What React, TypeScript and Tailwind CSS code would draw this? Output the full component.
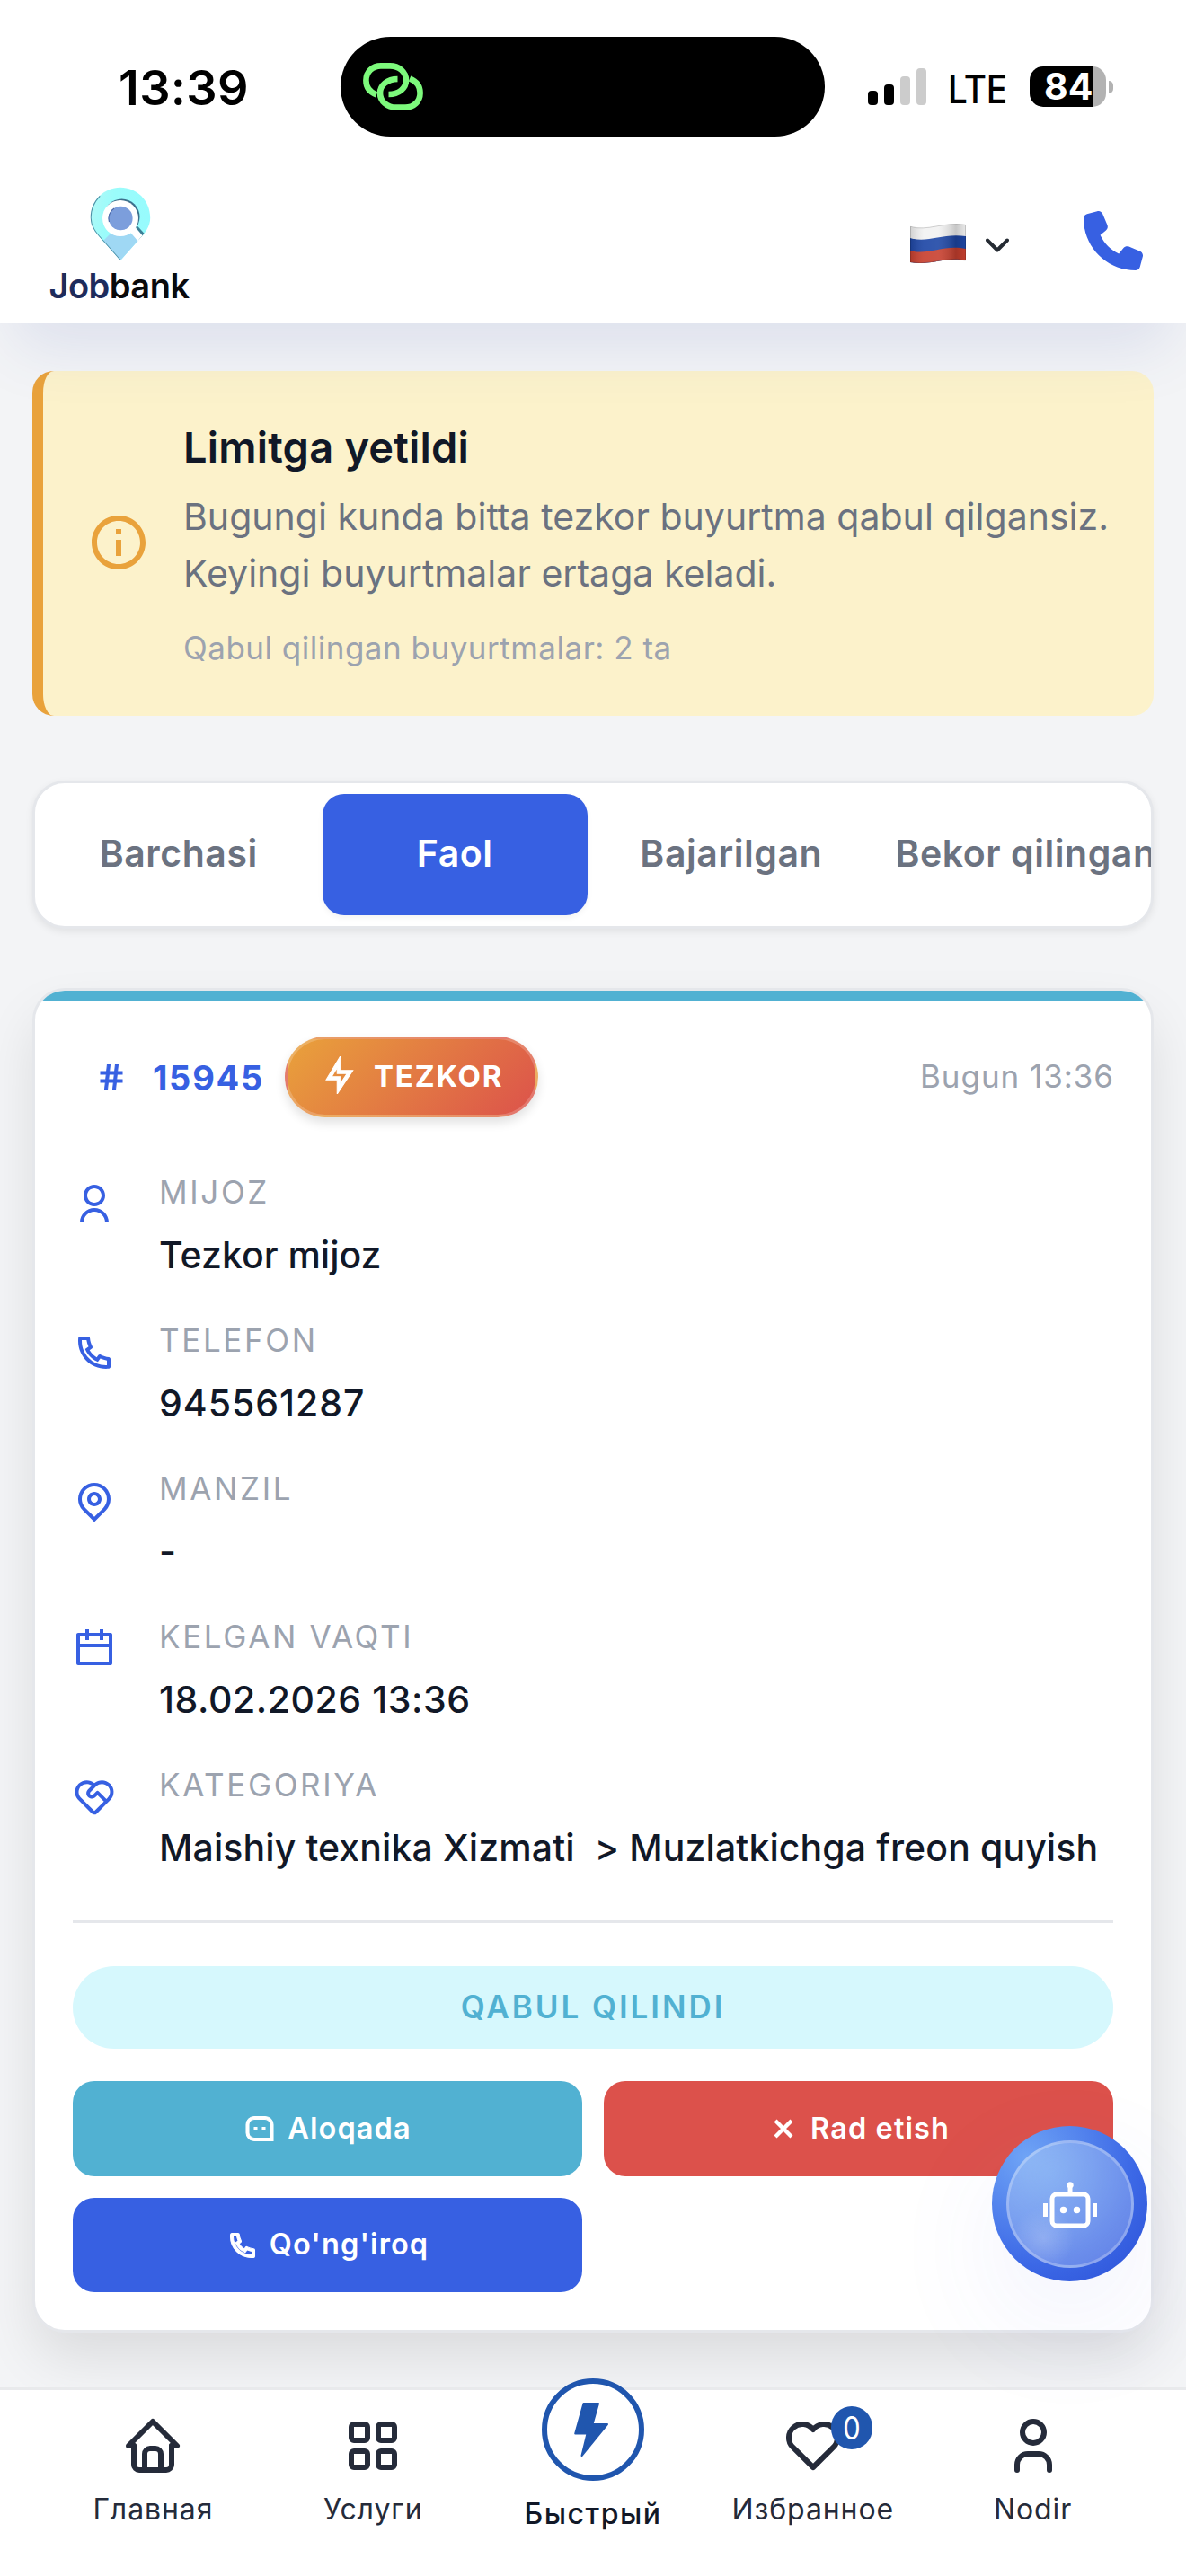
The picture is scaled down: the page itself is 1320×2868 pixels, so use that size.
import type { ReactNode } from "react";
import {
  RiCalendarLine,
  RiCloseLine,
  RiFlashlightLine,
  RiHashtag,
  RiInformationLine,
  RiMapPinLine,
  RiMessage3Line,
  RiPhoneLine,
  RiServiceLine,
  RiUserLine,
} from "react-icons/ri";

function LinkIcon() {
  const loop = "M15 35.5C7.5 32.5 3.4 27 3.4 19.5C3.4 10 10.5 3.4 20 3.4H30C40 3.4 48 10 48 19.5C48 28 40 35 28.5 35";
  return (
    <svg viewBox="0 0 67 53" className="h-[53px] w-[67px]" fill="none" stroke="#7dfa7c" strokeWidth="6.6">
      <path d={loop} />
      <path d={loop} transform="rotate(180 33.5 26.5)" />
    </svg>
  );
}

function StatusBar() {
  return (
    <div className="flex h-[193px] items-center">
      <div className="mt-[3px] w-[379px] pl-[132px] text-[54px] font-semibold leading-[60px] tracking-[0.3px] text-black">13:39</div>
      <div className="flex h-[111px] w-[539px] items-center rounded-[56px] bg-black pl-[25px]">
        <LinkIcon />
      </div>
      <div className="ml-12 flex h-[41px] items-end gap-[7px]">
        <span className="h-4 w-[11px] rounded-[4px] bg-black" />
        <span className="h-[23px] w-[11px] rounded-[4px] bg-black" />
        <span className="h-8 w-[11px] rounded-[4px] bg-[#cccccc]" />
        <span className="h-[41px] w-[11px] rounded-[4px] bg-[#cccccc]" />
      </div>
      <div className="ml-[24px] mt-[4px] w-[64px] origin-left scale-x-[0.88] text-[44px] font-medium leading-[48px] tracking-[-0.5px] text-black">
        LTE
      </div>
      <div className="ml-[27px] flex h-[45px] w-[85px] items-center overflow-hidden rounded-[15px] bg-[linear-gradient(90deg,#000_71px,#b2b2b2_71px)] pl-4 text-[41px] font-bold leading-[45px] text-white">
        84
      </div>
      <span className="ml-[3px] h-[14px] w-[5px] rounded-r-full bg-[#b2b2b2]" />
    </div>
  );
}

function Logo() {
  return (
    <div className="flex w-[160px] flex-col items-center">
      <svg viewBox="0 0 68 82" className="h-[82px] w-[68px]">
        <defs>
          <linearGradient id="pin" x1="0" y1="0" x2="1" y2="0.3">
            <stop offset="0" stopColor="#b4f8f6" />
            <stop offset="0.4" stopColor="#9afcfb" />
            <stop offset="1" stopColor="#97fbfd" />
          </linearGradient>
          <clipPath id="drop">
            <path d="M34 82L14.5 60C6 51 .8 44 .8 34.5C.8 15 16 .8 34 .8S67.200 15 67.200 34.500C67.200 44 62 51 53.500 60Z" />
          </clipPath>
        </defs>
        <g clipPath="url(#drop)">
          <rect width="68" height="82" fill="url(#pin)" />
          <path d="M15 60L23 52L46 52L56 60L34 84Z" fill="#9fd8f4" />
          <path d="M34 82L14.500 60C6 51 .8 44 .8 34.500C.8 25 5 16 11 10" fill="none" stroke="#4f8fa6" strokeWidth="1.8" />
          <circle cx="35.500" cy="33.500" r="20" fill="#3c6f8c" />
          <path d="M50 47L60 58" stroke="#3c7f96" strokeWidth="9" />
          <path d="M48 48L60 62" stroke="#fff" strokeWidth="8" />
          <circle cx="34" cy="35" r="20" fill="#fff" />
        </g>
        <circle cx="34.300" cy="35" r="13.300" fill="#7c9edc" />
        <path d="M21.500 39A13.300 13.300 0 0 1 27 24" fill="none" stroke="#4a67a8" strokeWidth="1.200" />
      </svg>
      <div className="-ml-[3px] mt-2 text-[38px] font-semibold leading-[40px] tracking-[-0.5px] text-[#0a0a0c]">
        <span className="text-[#1e2c5c]">Job</span>bank
      </div>
    </div>
  );
}

function Flag() {
  return (
    <svg viewBox="0 0 62 44" className="mt-[6px] h-[44px] w-[62px]">
      <defs>
        <linearGradient id="sheen" x1="0" x2="1" y1="0" y2="0">
          <stop offset="0" stopColor="#000" stopOpacity="0.14" />
          <stop offset="0.25" stopColor="#fff" stopOpacity="0.08" />
          <stop offset="0.5" stopColor="#fff" stopOpacity="0.1" />
          <stop offset="0.82" stopColor="#000" stopOpacity="0.18" />
          <stop offset="1" stopColor="#000" stopOpacity="0.04" />
        </linearGradient>
        <clipPath id="cloth">
          <path d="M0 3C20 9 36-3 62 1V41C40 36 24 47 0 43Z" />
        </clipPath>
      </defs>
      <g clipPath="url(#cloth)">
        <rect width="62" height="44" fill="#f2f2f2" />
        <path d="M0 16C20 22 36 10 62 14V44H0Z" fill="#1e47a6" />
        <path d="M0 30C20 36 36 23 62 28V44H0Z" fill="#c8402f" />
        <rect width="62" height="44" fill="url(#sheen)" />
      </g>
      <path d="M.5 3.300C20 9 36-2.500 61.500 1.300V41C40 36 24 46.500 .5 43Z" fill="none" stroke="#000" strokeOpacity="0.16" />
    </svg>
  );
}

function Header() {
  return (
    <header className="relative z-10 h-[360px] shrink-0 bg-white shadow-[0_42px_66px_-18px_rgba(60,85,180,0.13)]">
      <StatusBar />
      <div className="flex h-[167px] items-start justify-between pl-[54px] pr-12 pt-[15px]">
        <Logo />
        <div className="flex h-[120px] items-center">
          <Flag />
          <svg viewBox="0 0 26 16" className="ml-[22px] mt-[10px] h-4 w-[26px]" fill="none" stroke="#252b33" strokeWidth="4" strokeLinecap="round" strokeLinejoin="round">
            <path d="M2 2.500L13 13.500L24 2.500" />
          </svg>
          <svg viewBox="0 0 512 512" className="ml-[83px] h-[66px] w-[66px]" fill="#3760e2">
            <path d="M164.900 24.600c-7.700-18.600-28-28.500-47.400-23.200l-88 24C12.100 30.200 0 46 0 64C0 311.400 200.600 512 448 512c18 0 33.800-12.100 38.600-29.500l24-88c5.300-19.400-4.600-39.700-23.200-47.400l-96-40c-16.300-6.800-35.200-2.100-46.300 11.600L304.700 368C234.300 334.700 177.300 277.700 144 207.300L193.300 167c13.700-11.200 18.400-30 11.600-46.300l-40-96z" />
          </svg>
        </div>
      </div>
    </header>
  );
}

function LimitNotice() {
  return (
    <section className="flex h-[384px] rounded-[24px] border-l-[12px] border-[#e9a23b] bg-[#fcf2cb] pl-12">
      <RiInformationLine className="mt-[155px] h-[72px] w-[72px] shrink-0 text-[#e9a23b]" />
      <div className="ml-9 whitespace-nowrap pt-[55px]">
        <h2 className="text-[47px] font-semibold leading-[60px] tracking-[0.19px] text-[#111827]">Limitga yetildi</h2>
        <p className="mt-4 text-[41px] leading-[63px] tracking-[0.03px] text-[#6b7280]">
          Bugungi kunda bitta tezkor buyurtma qabul qilgansiz.
          <br />
          Keyingi buyurtmalar ertaga keladi.
        </p>
        <p className="mt-6 text-[35px] leading-[54px] tracking-[0.5px] text-[#9ca3af]">Qabul qilingan buyurtmalar: 2 ta</p>
      </div>
    </section>
  );
}

const tabs = ["Barchasi", "Faol", "Bajarilgan", "Bekor qilingan"];

function Tabs() {
  return (
    <div className="mt-[72px] flex h-[165px] gap-3 overflow-hidden rounded-[36px] border-[3px] border-[#e5e7eb] bg-white p-3 shadow-[0_3px_9px_rgba(0,0,0,0.08)]">
      {tabs.map((tab) => (
        <button
          key={tab}
          className={
            tab === "Faol"
              ? "w-[295.5px] shrink-0 whitespace-nowrap rounded-[24px] bg-[#3760e2] pb-0.5 text-[41px] font-semibold tracking-[0.55px] text-white shadow-[0_3px_6px_rgba(0,0,0,0.05)]"
              : "min-w-[295.5px] shrink-0 whitespace-nowrap px-[23px] pb-0.5 text-[41px] font-semibold tracking-[0.55px] text-[#6b7280]"
          }
        >
          {tab}
        </button>
      ))}
    </div>
  );
}

function DetailRow({ icon, label, children, spacing }: { icon: ReactNode; label: string; children: ReactNode; spacing: string }) {
  return (
    <div className="flex h-[127px] gap-12">
      <div className="mt-4 text-[48px] text-[#3760e2]">{icon}</div>
      <div className="-mt-px whitespace-nowrap">
        <div className="text-[35px] leading-[54px] tracking-[2.65px] text-[#9ca3af]">{label}</div>
        <div className={`mt-3 whitespace-pre text-[41px] font-medium leading-[63px] text-[#111827] ${spacing}`}>{children}</div>
      </div>
    </div>
  );
}

function OrderCard() {
  return (
    <article className="mt-[66px] h-[1497px] overflow-hidden rounded-[36px] border-[3px] border-[#e5e7eb] bg-white shadow-[0_30px_60px_-3px_rgba(0,0,0,0.1)]">
      <div className="h-3 bg-[#51b1d2]" />
      <div className="px-[42px]">
        <div className="mt-[39px] flex h-[90px] items-center">
          <RiHashtag className="ml-[25px] h-9 w-9 stroke-[#3760e2] stroke-[0.7] text-[#3760e2]" />
          <span className="ml-7 mt-px w-[147px] text-[38px] font-bold leading-[48px] tracking-[1.74px] text-[#3760e2]">15945</span>
          <span className="flex h-[90px] w-[282px] items-center rounded-full border-[3px] border-white/20 bg-[linear-gradient(135deg,#e9a23b,#dc524b)] pl-[36px] text-[33px] font-bold tracking-[1.8px] text-white shadow-[0_6px_12px_rgba(0,0,0,0.12)]">
            <RiFlashlightLine className="mb-1 mr-[18px] h-[42px] w-[42px] stroke-white stroke-[0.6]" />
            TEZKOR
          </span>
          <span className="-mt-px ml-auto text-[35px] tracking-[0.95px] -mr-px text-[#9ca3af]">Bugun 13:36</span>
        </div>
        <div className="mt-[57px] flex flex-col gap-[38px]">
          <DetailRow icon={<RiUserLine />} label="MIJOZ" spacing="tracking-normal">
            Tezkor mijoz
          </DetailRow>
          <DetailRow icon={<RiPhoneLine />} label="TELEFON" spacing="tracking-[0.96px]">
            945561287
          </DetailRow>
          <DetailRow icon={<RiMapPinLine />} label="MANZIL" spacing="tracking-normal">
            -
          </DetailRow>
          <DetailRow icon={<RiCalendarLine />} label="KELGAN VAQTI" spacing="tracking-[0.55px]">
            18.02.2026 13:36
          </DetailRow>
          <DetailRow icon={<RiServiceLine />} label="KATEGORIYA" spacing="tracking-[0.1px]">
            {"Maishiy texnika Xizmati  > Muzlatkichga freon quyish"}
          </DetailRow>
        </div>
        <div className="mt-[50px] h-[3px] bg-[#e5e7eb]" />
        <div className="mt-12 flex h-[92px] items-center justify-center rounded-full bg-[#d6f8fd] pb-0.5 text-[35px] font-semibold tracking-[2.95px] text-[#51b1d2]">
          QABUL QILINDI
        </div>
        <div className="mt-9 grid grid-cols-2 gap-6 text-[32.5px] font-semibold tracking-[1.1px] text-white">
          <button className="flex h-[106px] items-center justify-center rounded-[24px] bg-[#51b1d2]">
            <RiMessage3Line className="mr-[13px] h-9 w-9 stroke-white stroke-[0.7]" />
            Aloqada
          </button>
          <button className="flex h-[106px] items-center justify-center rounded-[24px] bg-[#dc514b]">
            <RiCloseLine className="mr-[12px] h-9 w-9 stroke-white stroke-[0.9]" />
            Rad etish
          </button>
          <button className="flex h-[105px] items-center justify-center rounded-[24px] bg-[#3760e2]">
            <RiPhoneLine className="mr-[12px] h-9 w-9 stroke-white stroke-[0.7]" />
            Qo'ng'iroq
          </button>
        </div>
      </div>
    </article>
  );
}

function AssistantButton() {
  return (
    <button className="absolute left-[1104px] top-[2367px] z-30 flex h-[173px] w-[173px] items-center justify-center rounded-full bg-[radial-gradient(circle_at_22%_20%,#6fa4f6_0%,#3c68e6_62%,#2a4fd6_100%)] shadow-[0_48px_130px_rgba(79,90,235,0.08)]">
      <span className="flex h-[142px] w-[142px] items-center justify-center rounded-full border-[3px] border-white/25 bg-[radial-gradient(circle_at_28%_78%,rgba(255,255,255,0.2)_0%,transparent_24%),radial-gradient(circle_at_35%_25%,rgba(170,203,245,0.55)_0%,rgba(160,178,240,0.42)_100%)]">
        <svg viewBox="0 0 24 24" className="mt-2 h-[60px] w-[60px]" fill="#fff">
          <path d="M13.500 2c0 .444-.193.843-.5 1.118V5h5a3 3 0 0 1 3 3v10a3 3 0 0 1-3 3H6a3 3 0 0 1-3-3V8a3 3 0 0 1 3-3h5V3.118A1.500 1.500 0 1 1 13.500 2ZM6 7a1 1 0 0 0-1 1v10a1 1 0 0 0 1 1h12a1 1 0 0 0 1-1V8a1 1 0 0 0-1-1H6Zm-4 3H0v6h2v-6Zm20 0h2v6h-2v-6ZM9 14.500a1.500 1.500 0 1 0 0-3 1.500 1.500 0 0 0 0 3Zm6 0a1.500 1.500 0 1 0 0-3 1.500 1.500 0 0 0 0 3Z" />
        </svg>
      </span>
    </button>
  );
}

function NavIcon({ children }: { children: ReactNode }) {
  return (
    <svg viewBox="0 0 24 24" className="h-[72px] w-[72px]" fill="none" stroke="#252b3a" strokeWidth="2" strokeLinecap="round" strokeLinejoin="round">
      {children}
    </svg>
  );
}

function NavItem({ label, icon, badge }: { label: string; icon: ReactNode; badge?: string }) {
  return (
    <a className="flex flex-col items-center pt-[26px]">
      <span className="relative">
        <NavIcon>{icon}</NavIcon>
        {badge && (
          <span className="absolute -top-2 left-[56px] flex h-12 w-[46px] items-center justify-center rounded-full bg-[#2056ae] text-[35px] leading-none text-white">
            <span className="scale-x-[0.88]">{badge}</span>
          </span>
        )}
      </span>
      <span className="mt-[11px] text-[32px] leading-[48px] tracking-[0.9px] text-[#252b3a]">{label}</span>
    </a>
  );
}

function BottomNav() {
  return (
    <nav className="relative z-20 mt-[61px] grid h-[210px] shrink-0 grid-cols-5 border-t-[3px] border-[#e9eaec] bg-white px-12">
      <NavItem
        label="Главная"
        icon={
          <>
            <path d="M5 12H3l9-9 9 9h-2" />
            <path d="M5 12v7a2 2 0 0 0 2 2h10a2 2 0 0 0 2-2v-7" />
            <path d="M9 21v-6a2 2 0 0 1 2-2h2a2 2 0 0 1 2 2v6" />
          </>
        }
      />
      <NavItem
        label="Услуги"
        icon={
          <>
            <rect x="4" y="4" width="6" height="6" rx="1" />
            <rect x="14" y="4" width="6" height="6" rx="1" />
            <rect x="4" y="14" width="6" height="6" rx="1" />
            <rect x="14" y="14" width="6" height="6" rx="1" />
          </>
        }
      />
      <a className="-mt-[13px] flex flex-col items-center">
        <span className="flex h-[114px] w-[114px] items-center justify-center rounded-full border-[6px] border-[#2056ae] bg-white">
          <svg viewBox="0 0 38 60" className="mr-1 h-[60px] w-[38px]" fill="#2056ae" stroke="#2056ae" strokeWidth="2" strokeLinejoin="round">
            <path d="M10.500 1H27L20.500 24H37L8.500 59L14.500 34.500H1.200Z" />
          </svg>
        </span>
        <span className="mt-[13px] text-[32px] font-medium leading-[48px] tracking-[1.500px] text-[#111827]">Быстрый</span>
      </a>
      <NavItem
        label="Избранное"
        badge="0"
        icon={<path d="M19.500 12.572l-7.500 7.428l-7.500-7.428a5 5 0 1 1 7.500-6.566a5 5 0 1 1 7.500 6.572" />}
      />
      <NavItem
        label="Nodir"
        icon={
          <>
            <circle cx="12" cy="7" r="4" />
            <path d="M6 21v-2a4 4 0 0 1 4-4h4a4 4 0 0 1 4 4v2" />
          </>
        }
      />
    </nav>
  );
}

export default function App() {
  return (
    <div className="relative flex h-[2868px] w-[1320px] flex-col overflow-hidden bg-[#f3f4f6] font-['Inter',sans-serif]">
      <Header />
      <main className="shrink-0 px-9 pt-[53px]">
        <LimitNotice />
        <Tabs />
        <OrderCard />
      </main>
      <BottomNav />
      <AssistantButton />
    </div>
  );
}
